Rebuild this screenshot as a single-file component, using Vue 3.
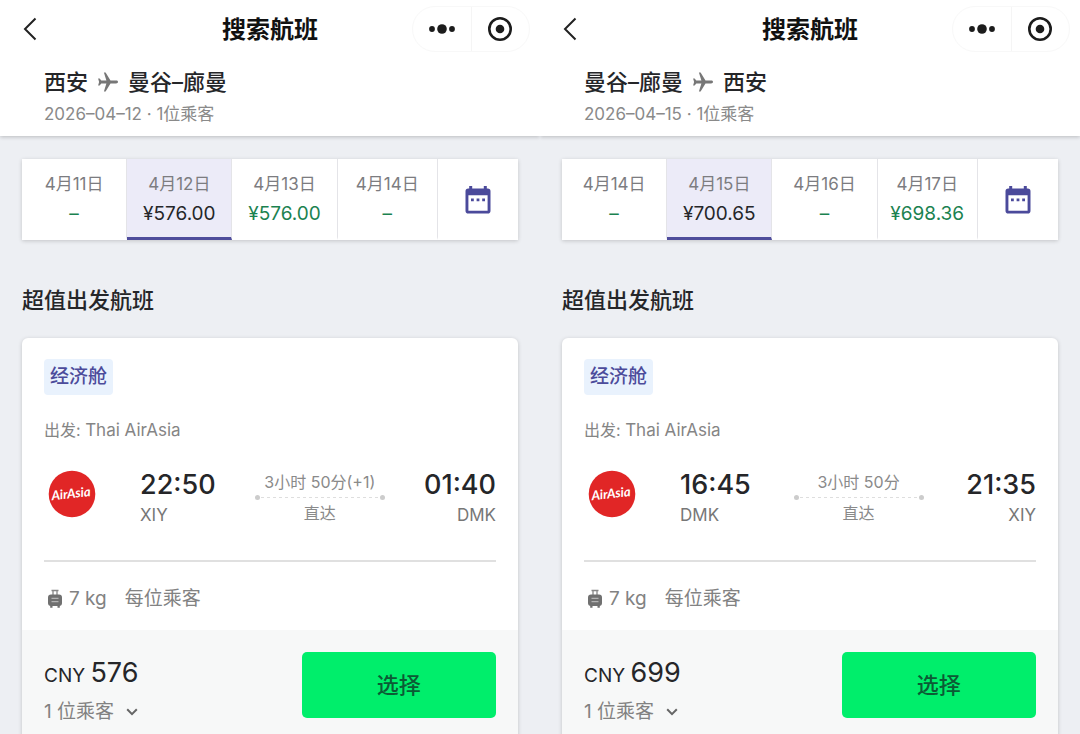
<script setup>
const panels = [
  {
    id: 'outbound',
    from: '西安',
    to: '曼谷–廊曼',
    date: '2026–04–12',
    days: [
      { label: '4月11日', price: '–' },
      { label: '4月12日', price: '¥576.00', active: true },
      { label: '4月13日', price: '¥576.00' },
      { label: '4月14日', price: '–' },
    ],
    depart: { time: '22:50', code: 'XIY' },
    arrive: { time: '01:40', code: 'DMK' },
    duration: '3小时 50分(+1)',
    fare: '576',
  },
  {
    id: 'inbound',
    from: '曼谷–廊曼',
    to: '西安',
    date: '2026–04–15',
    days: [
      { label: '4月14日', price: '–' },
      { label: '4月15日', price: '¥700.65', active: true },
      { label: '4月16日', price: '–' },
      { label: '4月17日', price: '¥698.36' },
    ],
    depart: { time: '16:45', code: 'DMK' },
    arrive: { time: '21:35', code: 'XIY' },
    duration: '3小时 50分',
    fare: '699',
  },
]
</script>

<template>
  <div class="page">
    <section v-for="p in panels" :key="p.id" class="panel">
      <header class="head">
        <div class="nav">
          <button class="back" type="button" aria-label="返回">
            <svg width="16" height="26" viewBox="0 0 16 26" fill="none" stroke="#222" stroke-width="2">
              <path d="M13.5 2.5 3 13l10.5 10.5" />
            </svg>
          </button>
          <h1 class="title">搜索航班</h1>
          <div class="capsule">
            <button type="button" aria-label="更多">
              <svg width="28" height="12" viewBox="0 0 28 12" fill="#1c1c1c">
                <circle cx="4" cy="6" r="2.9" />
                <circle cx="14" cy="6" r="4.8" />
                <circle cx="24" cy="6" r="2.9" />
              </svg>
            </button>
            <button type="button" aria-label="关闭">
              <svg width="26" height="26" viewBox="0 0 26 26">
                <circle cx="13" cy="13" r="10.7" fill="none" stroke="#1c1c1c" stroke-width="2.6" />
                <circle cx="13" cy="13" r="4.3" fill="#1c1c1c" />
              </svg>
            </button>
          </div>
        </div>
        <div class="route">
          <span>{{ p.from }}</span>
          <svg width="22" height="22" viewBox="0 0 22 22" fill="#777" aria-hidden="true">
            <path d="M21 11c0-.9-.8-1.4-1.9-1.4h-5.6L8.6 1.5H6.9l2.5 8.1H4.3L2.6 7.4H1.1L2.1 11l-1 3.6h1.5l1.7-2.2h5.1l-2.5 8.1h1.7l4.9-8.1h5.6c1.1 0 1.9-.5 1.9-1.4z" />
          </svg>
          <span>{{ p.to }}</span>
        </div>
        <p class="meta">{{ p.date }} · 1位乘客</p>
      </header>

      <main class="body">
        <div class="days">
          <button v-for="d in p.days" :key="d.label" type="button" class="day" :class="{ active: d.active }">
            <span class="label">{{ d.label }}</span>
            <span class="price">{{ d.price }}</span>
          </button>
          <button type="button" class="day" aria-label="选择日期">
            <svg width="26" height="28" viewBox="0 0 26 28">
              <path
                fill="#4b4a9b"
                fill-rule="evenodd"
                d="M4.2 0h3v2.4h11.6V0h3v2.4h.9a2.8 2.8 0 0 1 2.8 2.8v19.6a2.8 2.8 0 0 1-2.8 2.8H3.3a2.8 2.8 0 0 1-2.8-2.8V5.2a2.8 2.8 0 0 1 2.8-2.8h.9zM3.4 9.300v15.400h19.200V9.300z"
              />
              <path fill="#4b4a9b" d="M6 12.500h2.800v2.800H6zM11.600 12.500h2.800v2.800h-2.800zM17.200 12.500H20v2.800h-2.800z" />
            </svg>
          </button>
        </div>

        <h2 class="section-title">超值出发航班</h2>

        <article class="card">
          <div class="info">
            <span class="tag">经济舱</span>
            <p class="carrier">出发: <span>Thai AirAsia</span></p>
            <div class="flight">
              <svg class="logo" width="48" height="48" viewBox="0 0 48 48" role="img" aria-label="AirAsia">
                <circle cx="24" cy="24" r="23.300" fill="#e12626" />
                <text x="23" y="28" text-anchor="middle" transform="rotate(-6 24 24)" class="logo-text">AirAsia</text>
              </svg>
              <div class="stop">
                <span class="time">{{ p.depart.time }}</span>
                <span class="code">{{ p.depart.code }}</span>
              </div>
              <div class="leg">
                <span>{{ p.duration }}</span>
                <span class="line"></span>
                <span>直达</span>
              </div>
              <div class="stop end">
                <span class="time">{{ p.arrive.time }}</span>
                <span class="code">{{ p.arrive.code }}</span>
              </div>
            </div>
            <div class="baggage">
              <svg width="16" height="20" viewBox="0 0 16 20" aria-hidden="true">
                <path d="M4.500 1.500h7M6 1.500V6M10 1.500V6" fill="none" stroke="#888" stroke-width="1.300" />
                <rect x="1" y="5.500" width="14" height="11.500" rx="3" fill="#707070" />
                <path d="M3.200 16h2.300v2.700H3.200zM10.500 16h2.300v2.700h-2.300z" fill="#707070" />
                <path d="M4.500 9.300h7M4.500 12.700h7" stroke="#c4c4c4" stroke-width="1" />
              </svg>
              <span>7 kg</span>
              <span class="each">每位乘客</span>
            </div>
          </div>
          <footer class="foot">
            <div>
              <p class="fare">CNY <strong>{{ p.fare }}</strong></p>
              <button type="button" class="pax">
                1 位乘客
                <svg width="12" height="8" viewBox="0 0 12 8" fill="none" stroke="#666" stroke-width="2">
                  <path d="M1.200 1.300 6 6.100l4.800-4.800" />
                </svg>
              </button>
            </div>
            <button type="button" class="select">选择</button>
          </footer>
        </article>
      </main>
    </section>
  </div>
</template>

<style>
body {
  margin: 0;
  background: #edeff3;
}
</style>

<style scoped>
.page {
  display: grid;
  grid-template-columns: 1fr 1fr;
  min-height: 100vh;
  font-family: Inter, "Noto Sans CJK SC", sans-serif;
  color: #252629;
  background: #edeff3;
}
.page * {
  box-sizing: border-box;
}
button {
  font: inherit;
  color: inherit;
  border: 0;
  padding: 0;
  background: none;
  cursor: pointer;
}
p, h1, h2 {
  margin: 0;
}
svg {
  display: block;
  flex: none;
}
.panel {
  display: flex;
  flex-direction: column;
  min-width: 0;
}
.head {
  height: 136px;
  background: #fff;
  box-shadow: 0 1px 4px rgba(0, 0, 0, 0.22);
  clip-path: inset(0 0 -8px 0);
}
.nav {
  display: grid;
  grid-template-columns: 1fr auto 1fr;
  align-items: center;
  height: 58px;
  padding: 0 10px 0 22px;
}
.back {
  width: 16px;
}
.nav .title {
  padding: 2px 12px 0 0;
  font-size: 24px;
  line-height: 32px;
  font-weight: 700;
  color: #111;
}
.capsule {
  justify-self: end;
  display: flex;
  width: 118px;
  height: 46px;
  border: 1px solid #f8f8f8;
  border-radius: 23px;
}
.capsule button {
  flex: 1;
  display: grid;
  place-items: center;
}
.capsule button + button {
  border-left: 1px solid #f5f5f5;
}
.route {
  display: flex;
  align-items: center;
  gap: 9px;
  height: 32px;
  margin-top: 8px;
  padding: 0 44px;
  font-size: 22px;
  font-weight: 500;
  line-height: 32px;
}
.meta {
  padding: 0 44px;
  margin-top: 4px;
  font-size: 17px;
  line-height: 24px;
  color: #8a8a8a;
}
.body {
  flex: 1;
  display: flex;
  flex-direction: column;
  padding: 23px 22px 0;
}
.days {
  display: grid;
  grid-template-columns: 21fr 21fr 21fr 20fr 16fr;
  height: 81px;
  background: #fff;
  box-shadow: 0 1px 4px rgba(0, 0, 0, 0.18);
}
.day {
  display: flex;
  flex-direction: column;
  align-items: center;
  justify-content: center;
  min-width: 0;
  padding-top: 4px;
  border-right: 1px solid #e4e4e8;
  border-bottom: 3px solid transparent;
}
.day:last-child {
  border-right: 0;
}
.day.active {
  background: #ecebf8;
  border-bottom-color: #4f4d9c;
}
.label {
  font-size: 17px;
  line-height: 28px;
  color: #7c7c80;
}
.price {
  font-size: 19px;
  line-height: 32px;
  color: #1b8250;
}
.active .price {
  color: #252629;
}
.section-title {
  margin: 44px 0 22px;
  font-size: 22px;
  line-height: 32px;
  font-weight: 500;
}
.card {
  flex: 1;
  display: flex;
  flex-direction: column;
  border-radius: 6px 6px 0 0;
  background: #fff;
  box-shadow: 0 1px 4px rgba(0, 0, 0, 0.18);
}
.info {
  padding: 21px 22px 16px;
}
.tag {
  display: inline-block;
  padding: 0 6px;
  border-radius: 4px;
  font-size: 19px;
  line-height: 36px;
  font-weight: 500;
  color: #4c4b9b;
  background: #e9f2fd;
}
.carrier {
  margin-top: 23px;
  font-size: 16px;
  line-height: 24px;
  color: #858585;
}
.carrier span {
  font-size: 17px;
}
.flight {
  display: flex;
  align-items: center;
  height: 120px;
  border-bottom: 2px solid #e0e0e0;
  padding-bottom: 8px;
}
.logo {
  margin: 0 44px 6px 4px;
}
.logo-text {
  font: italic 700 13px Lato, sans-serif;
  fill: #fff;
}
.stop {
  display: flex;
  flex-direction: column;
}
.end {
  align-items: flex-end;
}
.time {
  font-size: 27px;
  line-height: 36px;
  font-weight: 500;
}
.code {
  font-size: 17px;
  line-height: 24px;
  color: #777;
}
.leg {
  display: flex;
  flex-direction: column;
  align-items: center;
  width: 130px;
  margin: 0 auto;
  font-size: 16px;
  line-height: 26px;
  color: #8a8a8a;
}
.line {
  display: flex;
  align-items: center;
  justify-content: space-between;
  width: 100%;
  height: 5px;
  background: repeating-linear-gradient(90deg, #dedede 0 3px, transparent 3px 6px) center / 100% 1px no-repeat;
}
.line::before,
.line::after {
  content: "";
  width: 5px;
  height: 5px;
  border-radius: 50%;
  background: #ccc;
}
.baggage {
  display: flex;
  align-items: center;
  margin-top: 22px;
  padding-left: 3px;
  font-size: 19px;
  line-height: 30px;
  color: #828282;
}
.baggage svg {
  margin-right: 6px;
}
.each {
  margin-left: 18px;
}
.foot {
  flex: 1;
  display: flex;
  justify-content: space-between;
  align-items: flex-start;
  padding: 22px 22px 16px;
  background: #f7f8f8;
}
.fare {
  font-size: 19px;
  line-height: 42px;
}
.fare strong {
  font-size: 27px;
  font-weight: 400;
}
.pax {
  display: flex;
  align-items: center;
  gap: 12px;
  font-size: 19px;
  line-height: 30px;
  color: #828282;
}
.select {
  width: 43%;
  height: 66px;
  padding-bottom: 4px;
  border-radius: 5px;
  background: #00ee6b;
  color: #0c5a35;
  font-size: 22px;
  font-weight: 500;
}
</style>
